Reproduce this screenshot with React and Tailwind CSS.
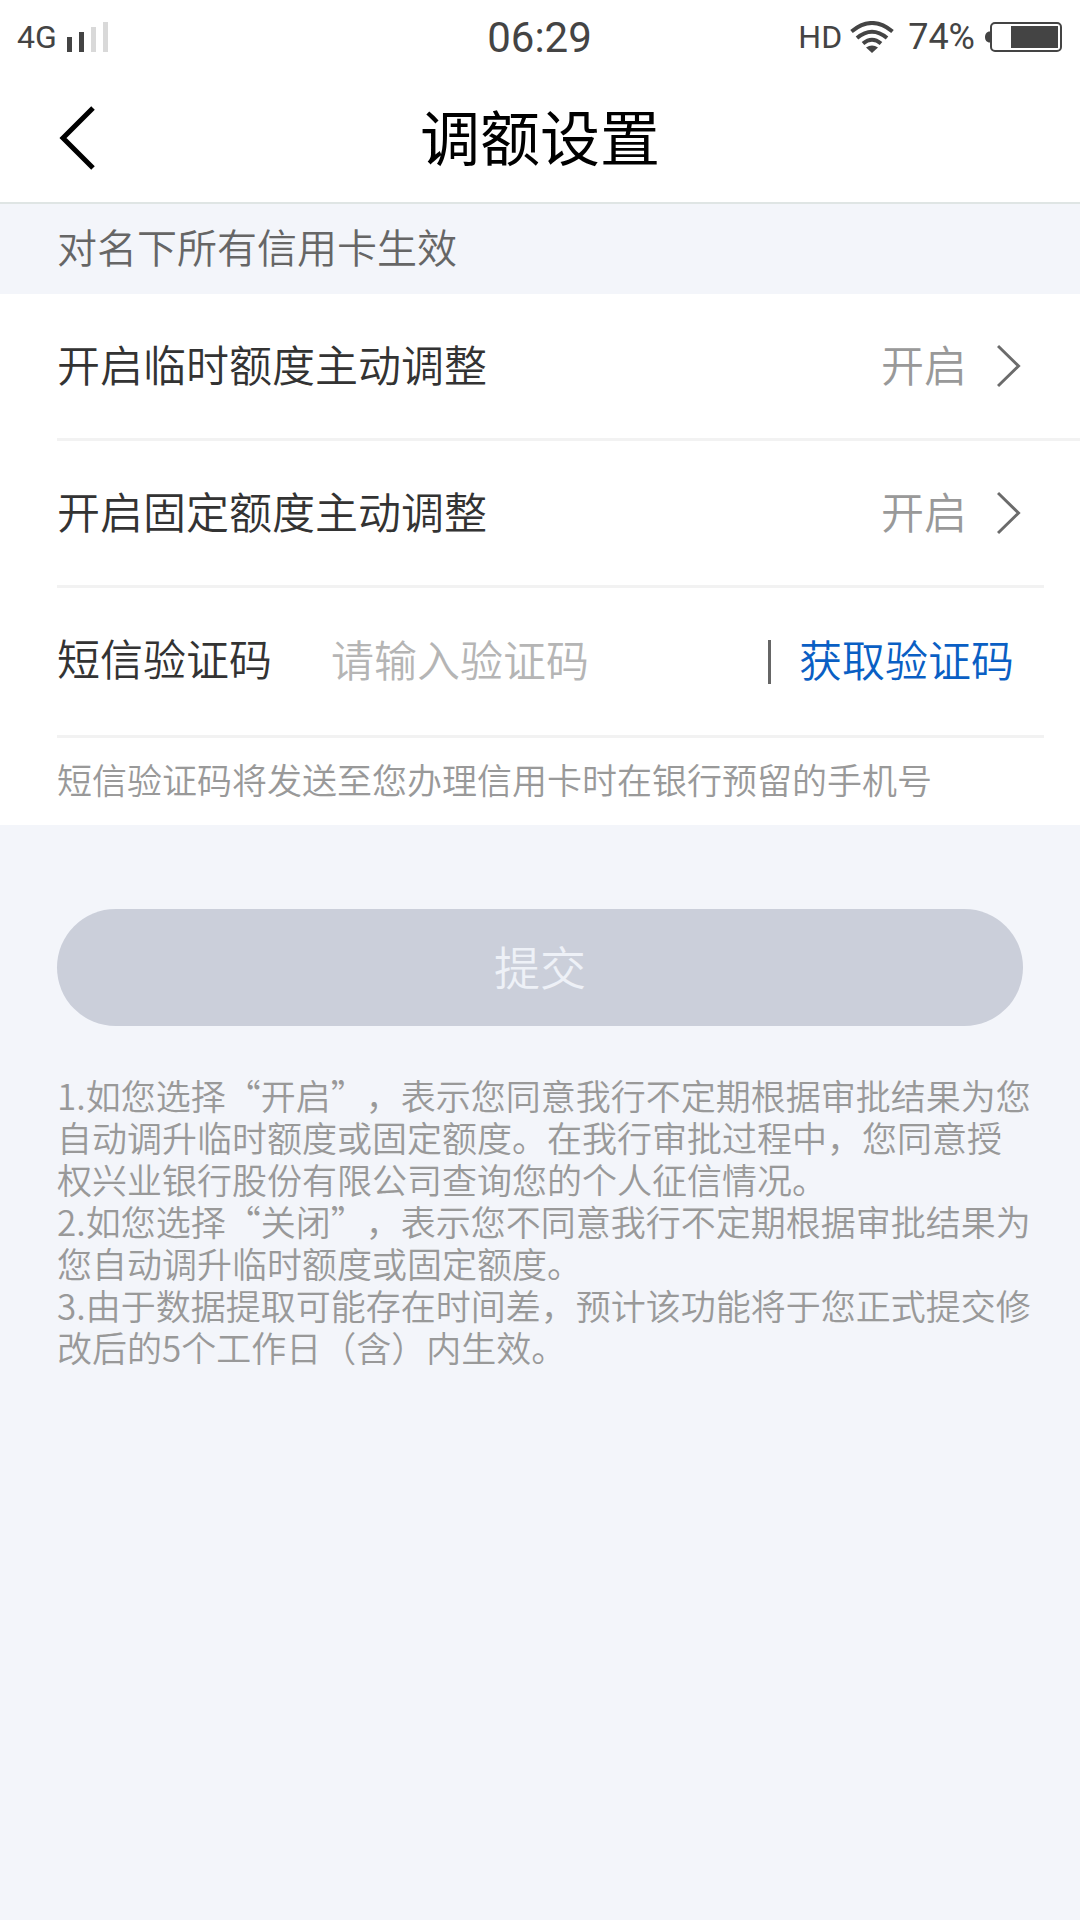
import React, { useState } from "react";

const limitItems = [
  { id: "temporary", label: "开启临时额度主动调整", value: "开启", fullLine: true },
  { id: "fixed", label: "开启固定额度主动调整", value: "开启" },
];

const notes = [
  "1.如您选择“开启”，表示您同意我行不定期根据审批结果为您自动调升临时额度或固定额度。在我行审批过程中，您同意授权兴业银行股份有限公司查询您的个人征信情况。",
  "2.如您选择“关闭”，表示您不同意我行不定期根据审批结果为您自动调升临时额度或固定额度。",
  "3.由于数据提取可能存在时间差，预计该功能将于您正式提交修改后的5个工作日（含）内生效。",
];

const SignalIcon = () => (
  <svg width="41" height="30" viewBox="0 0 41 30">
    <rect x="0" y="15" width="5" height="15" fill="#444" />
    <rect x="12" y="10" width="5" height="20" fill="#444" />
    <rect x="24" y="5" width="5" height="25" fill="#d9d9d9" />
    <rect x="36" y="0" width="5" height="30" fill="#d9d9d9" />
  </svg>
);

const WifiIcon = () => (
  <svg width="44" height="32" viewBox="0 0 44 32" fill="none" stroke="#444" strokeWidth="4">
    <path d="M1.5 10.5Q22 -6.5 42.5 10.5" />
    <path d="M7 17Q22 4.500 37 17" />
    <path d="M13 22.500Q22 15 31 22.500" />
    <path d="M16 26.500Q22 22.500 28 26.500L22 32Z" fill="#444" stroke="none" />
  </svg>
);

const BatteryIcon = () => (
  <svg width="77" height="30" viewBox="0 0 77 30">
    <path d="M5 9.500C1.500 9.500 0 12 0 15s1.500 5.500 5 5.500Z" fill="#444" />
    <rect x="6" y="1" width="70" height="28" rx="4" fill="none" stroke="#444" strokeWidth="2" />
    <rect x="26" y="4" width="47" height="22" fill="#444" />
  </svg>
);

const StatusBar = () => (
  <div className="grid grid-cols-3 items-center h-[74px] pl-[17px] pr-[18px] font-[Roboto,sans-serif] font-normal text-[#444]">
    <div className="flex items-center gap-2.5">
      <span className="text-[32px]">4G</span>
      <SignalIcon />
    </div>
    <div className="text-center text-[42px]">06:29</div>
    <div className="flex items-center justify-end">
      <span className="text-[32px] mr-2">HD</span>
      <WifiIcon />
      <span className="text-[36px] ml-3.5 mr-2.5">74%</span>
      <BatteryIcon />
    </div>
  </div>
);

const Header = () => (
  <header className="grid grid-cols-[1fr_auto_1fr] items-center h-[130px] px-[57px] border-b-2 border-[#dfe5e4]">
    <button type="button" aria-label="返回" className="justify-self-start">
      <svg width="40" height="66" viewBox="0 0 40 66" fill="none" stroke="#000" strokeWidth="5">
        <path d="M36 3L6 33l30 30" />
      </svg>
    </button>
    <h1 className="pb-1.5 text-[60px] leading-none font-normal text-black">调额设置</h1>
  </header>
);

const LimitRow = ({ item }) => (
  <div className={`ml-[57px] border-b-[3px] border-[#f2f2f2] ${item.fullLine ? "" : "mr-9"}`}>
    <button
      type="button"
      className={`flex items-center w-full h-36 text-left ${item.fullLine ? "pr-[59px]" : "pr-[23px]"}`}
    >
      <span className="flex-1 pb-1.5 text-[#333]">{item.label}</span>
      <span className="pb-1.5 text-[#999] mr-[30px]">{item.value}</span>
      <svg width="24" height="44" viewBox="0 0 24 44" fill="none" stroke="#6b6b6b" strokeWidth="3">
        <path d="M1 2l20.500 20L1 42" />
      </svg>
    </button>
  </div>
);

const App = () => {
  const [code, setCode] = useState("");

  return (
    <div
      lang="zh-CN"
      className="min-h-screen bg-[#f3f5fa] font-['Noto_Sans_CJK_SC',sans-serif] font-[350]"
    >
      <div className="bg-white">
        <StatusBar />
        <Header />
      </div>

      <h2 className="flex items-center h-[90px] px-[57px] pb-1.5 text-[40px] font-[350] text-[#666]">
        对名下所有信用卡生效
      </h2>

      <form onSubmit={(e) => e.preventDefault()}>
        <div className="bg-white text-[43px]">
          {limitItems.map((item) => (
            <LimitRow key={item.id} item={item} />
          ))}

          <div className="flex items-center h-[150px] ml-[57px] mr-9 pr-[30px] border-b-[3px] border-[#f2f2f2]">
            <label htmlFor="sms-code" className="pb-2 text-[#333] mr-[59px]">
              短信验证码
            </label>
            <input
              id="sms-code"
              type="text"
              inputMode="numeric"
              value={code}
              onChange={(e) => setCode(e.target.value)}
              placeholder="请输入验证码"
              className="flex-1 min-w-0 pb-1.5 outline-none text-[#333] placeholder:text-[#b5b5b5]"
            />
            <span className="w-[3px] h-11 bg-[#666] mr-7" />
            <button type="button" className="pb-1.5 text-[#0a5fc4]">
              获取验证码
            </button>
          </div>

          <p className="flex items-center h-[87px] px-[57px] pb-1 text-[35px] text-[#999]">
            短信验证码将发送至您办理信用卡时在银行预留的手机号
          </p>
        </div>

        <div className="px-[57px] pt-[84px]">
          <button
            type="submit"
            disabled
            className="w-full h-[117px] pb-1 rounded-full bg-[#cbcfda] text-[46px] text-[#eef1f7]"
          >
            提交
          </button>
        </div>
      </form>

      <div className="pl-[57px] pr-11 pt-12 text-[35px] leading-[42px] text-[#999] [text-spacing-trim:space-all]">
        {notes.map((note) => (
          <p key={note}>{note}</p>
        ))}
      </div>
    </div>
  );
};

export default App;
